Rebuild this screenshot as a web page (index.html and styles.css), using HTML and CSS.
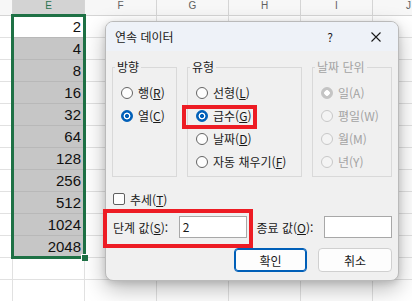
FILE: index.html
```html
<!DOCTYPE html>
<html lang="ko">
<head>
    <meta charset="UTF-8">
    <meta name="viewport" content="width=device-width, initial-scale=1.0">
    <title>연속 데이터</title>
    <link rel="stylesheet" href="styles.css">
</head>
<body>
    <div class="sheet">
        <!-- 열 머리글 -->
        <div class="colheads">
            <div class="colhead narrow"></div>
            <div class="colhead sel">E</div>
            <div class="colhead">F</div>
            <div class="colhead">G</div>
            <div class="colhead">H</div>
            <div class="colhead">I</div>
            <div class="colhead">J</div>
        </div>

        <!-- 셀 -->
        <div class="cells">
            <div class="spacer"></div>
            <div class="col-e">
                <div class="cell active">2</div>
                <div class="cell">4</div>
                <div class="cell">8</div>
                <div class="cell">16</div>
                <div class="cell">32</div>
                <div class="cell">64</div>
                <div class="cell">128</div>
                <div class="cell">256</div>
                <div class="cell">512</div>
                <div class="cell">1024</div>
                <div class="cell">2048</div>
            </div>
        </div>

        <!-- 선택 영역 -->
        <div class="selection"><span class="handle"></span></div>

        <!-- 대화 상자 -->
        <div class="dialog">
            <div class="titlebar">
                <span class="title">연속 데이터</span>
                <span class="help">?</span>
                <span class="close">
                    <svg width="10" height="10" viewBox="0 0 10 10"><path d="M0.5 0.5 L9.5 9.5 M9.5 0.5 L0.5 9.5" stroke="#1a1a1a" stroke-width="1.1" fill="none"/></svg>
                </span>
            </div>

            <div class="content">
                <div class="groups">
                    <fieldset class="group g-dir">
                        <legend>방향</legend>
                        <label class="opt"><span class="radio"></span><span>행(<u>R</u>)</span></label>
                        <label class="opt"><span class="radio on"></span><span>열(<u>C</u>)</span></label>
                    </fieldset>
                    <fieldset class="group g-type">
                        <legend>유형</legend>
                        <label class="opt"><span class="radio"></span><span>선형(<u>L</u>)</span></label>
                        <label class="opt"><span class="radio on"></span><span>급수(<u>G</u>)</span></label>
                        <label class="opt"><span class="radio"></span><span>날짜(<u>D</u>)</span></label>
                        <label class="opt"><span class="radio"></span><span>자동 채우기(<u>F</u>)</span></label>
                    </fieldset>
                    <fieldset class="group g-date dis">
                        <legend>날짜 단위</legend>
                        <label class="opt"><span class="radio dis-on"></span><span>일(A)</span></label>
                        <label class="opt"><span class="radio dis-off"></span><span>평일(W)</span></label>
                        <label class="opt"><span class="radio dis-off"></span><span>월(M)</span></label>
                        <label class="opt"><span class="radio dis-off"></span><span>년(Y)</span></label>
                    </fieldset>
                </div>

                <label class="check"><span class="box"></span><span>추세(<u>T</u>)</span></label>

                <div class="values">
                    <span class="lbl">단계 값(<u>S</u>):</span>
                    <div class="field">2</div>
                    <span class="lbl end">종료 값(<u>O</u>):</span>
                    <div class="field"></div>
                </div>

                <div class="buttons">
                    <button class="btn ok">확인</button>
                    <button class="btn cancel">취소</button>
                </div>
            </div>
        </div>

        <!-- 강조 표시 -->
        <div class="mark mark-type"></div>
        <div class="mark mark-step"></div>
    </div>
</body>
</html>
```

FILE: styles.css
```css
body {
    margin: 0;
    background: #fff;
    font-family: 'Liberation Sans', sans-serif;
}

.sheet {
    position: relative;
    width: 412px;
    height: 301px;
    overflow: hidden;
}

/* 열 머리글 */
.colheads {
    display: flex;
    height: 16px;
    box-sizing: border-box;
    background: #f7f7f7;
    border-bottom: 1px solid #d5d5d5;
}

.colhead {
    flex: 0 0 72px;
    box-sizing: border-box;
    border-right: 1px solid #d5d5d5;
    text-align: center;
    font-size: 10px;
    line-height: 11px;
    color: #616161;
}

.colhead.narrow { flex-basis: 13px; }
.colhead.sel { background: #d3d3d3; color: #2a7350; }

/* 셀 */
.cells {
    display: flex;
    height: 285px;
    background-color: #fff;
    background-image:
        linear-gradient(to left, #e1e1e1 1px, transparent 1px),
        linear-gradient(to top, #e1e1e1 1px, transparent 1px);
    background-size: 72px 100%, 100% 22px;
    background-position: 13px 0, 0 0;
}

.spacer { width: 13px; }
.col-e { width: 72px; }

.cell {
    height: 22px;
    box-sizing: border-box;
    padding-right: 3px;
    border-right: 1px solid #b8b8b8;
    border-bottom: 1px solid #b8b8b8;
    background: #c6c6c6;
    text-align: right;
    font-size: 15px;
    line-height: 21px;
    color: #111;
}

.cell.active { background: #fff; }

.selection {
    position: absolute;
    left: 11px;
    top: 14px;
    width: 75px;
    height: 245px;
    box-sizing: border-box;
    border: 3px solid #1e7145;
}

.handle {
    position: absolute;
    right: -5px;
    bottom: -5px;
    width: 6px;
    height: 6px;
    background: #1e7145;
    border-left: 1px solid #fff;
    border-top: 1px solid #fff;
}

/* 대화 상자 */
.dialog {
    position: absolute;
    left: 105px;
    top: 21px;
    width: 294px;
    height: 260px;
    box-sizing: border-box;
    display: flex;
    flex-direction: column;
    border: 1px solid #bababa;
    border-radius: 8px;
    background: #f0f0f0;
    box-shadow: 0 8px 22px rgba(0, 0, 0, 0.28), 0 2px 6px rgba(0, 0, 0, 0.12);
    overflow: hidden;
    font-family: 'Noto Sans CJK KR', sans-serif;
    font-size: 12px;
    color: #1a1a1a;
}

.titlebar {
    flex: none;
    height: 29px;
    display: flex;
    align-items: center;
    padding: 0 12px 0 9px;
    background: #eef2f8;
}

.title { flex: 1; }

.help {
    width: 20px;
    margin-right: 26px;
    text-align: center;
}

.close {
    width: 20px;
    height: 10px;
    display: flex;
    justify-content: center;
}

.content {
    display: flex;
    flex-direction: column;
    padding: 8px 6px 0;
}

/* 그룹 상자 */
.groups {
    display: flex;
    gap: 10px;
}

.group {
    margin: 0;
    min-width: 0;
    height: 118px;
    box-sizing: border-box;
    padding: 6px 0 0 8px;
    border: 1px solid #d9d9d9;
}

.g-dir { width: 65px; }
.g-type { width: 115px; }
.g-date { width: 80px; }

.group legend {
    margin-left: -6px;
    padding: 0 2px;
    line-height: 16px;
}

.dis { color: #a3a3a3; }

.opt {
    display: flex;
    align-items: center;
    gap: 5px;
    height: 23px;
    white-space: nowrap;
}

.radio {
    flex: none;
    width: 12px;
    height: 12px;
    box-sizing: border-box;
    border: 1px solid #646464;
    border-radius: 50%;
    background: #fdfdfd;
}

.radio.on {
    border-color: #005fb8;
    background: radial-gradient(circle, #005fb8 0 1.8px, #fff 2.3px 3.2px, #005fb8 3.7px);
}

.radio.dis-off {
    border-color: #c8c8c8;
    background: #f4f4f4;
}

.radio.dis-on {
    border-color: #c4c4c4;
    background: radial-gradient(circle, #fff 0 2.5px, #c4c4c4 3px);
}

/* 체크 상자 */
.check {
    margin-top: 14px;
    height: 16px;
    display: flex;
    align-items: center;
    gap: 5px;
    padding-left: 1px;
}

.box {
    width: 12px;
    height: 12px;
    box-sizing: border-box;
    border: 1px solid #5f5f5f;
    border-radius: 2px;
    background: #fdfdfd;
}

/* 값 입력 */
.values {
    margin-top: 9px;
    height: 22px;
    display: flex;
    align-items: center;
    padding-left: 1px;
}

.lbl { width: 66px; white-space: nowrap; }
.lbl.end { width: 68px; margin-left: 10px; }

.field {
    width: 68px;
    height: 22px;
    box-sizing: border-box;
    padding-left: 3px;
    border: 1px solid #a8a8a8;
    background: #fff;
    line-height: 20px;
}

/* 버튼 */
.buttons {
    margin-top: 10px;
    display: flex;
    justify-content: flex-end;
    gap: 11px;
}

.btn {
    height: 24px;
    padding: 0;
    box-sizing: border-box;
    border: 1px solid #d0d0d0;
    border-radius: 4px;
    background: #fdfdfd;
    font: inherit;
    color: #1a1a1a;
}

.btn.ok {
    width: 73px;
    border-color: #005fb8;
    box-shadow: inset 0 0 0 1px #005fb8;
}

.btn.cancel { width: 74px; }

/* 빨간 강조 상자 */
.mark {
    position: absolute;
    box-sizing: border-box;
    border: 4px solid #ed1c24;
}

.mark-type { left: 182px; top: 105px; width: 75px; height: 24px; }
.mark-step { left: 103px; top: 209px; width: 150px; height: 39px; }
```
